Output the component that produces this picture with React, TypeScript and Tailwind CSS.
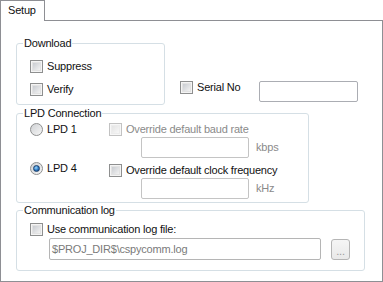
import React from "react";

const Checkbox = ({ disabled = false }: { disabled?: boolean }) => (
  <div
    className={`w-[13px] h-[13px] shrink-0 border p-[1px] ${
      disabled ? "border-[#c2c2c2] bg-[#f7f7f7]" : "border-[#8e8f8f] bg-[#f4f4f4]"
    }`}
  >
    <div
      className={`w-full h-full border bg-linear-to-br ${
        disabled
          ? "border-[#ececec] from-[#e4e4e4] to-[#f7f7f7]"
          : "border-[#e2e2e2] from-[#c9ccd1] to-[#f2f2f2]"
      }`}
    />
  </div>
);

const Radio = ({ checked = false }: { checked?: boolean }) => (
  <div className="w-[13px] h-[13px] shrink-0 rounded-full border border-[#8e8f8f] bg-linear-to-br from-[#cfd1d4] to-[#f6f6f6] flex items-center justify-center">
    {checked && (
      <div className="w-[7px] h-[7px] rounded-full border border-[#1b3f6b] bg-[radial-gradient(circle_at_40%_35%,#9ad8ff,#2a76c0_55%,#0f3c70)]" />
    )}
  </div>
);

const Field = ({ w, muted = false }: { w: string; muted?: boolean }) => (
  <div
    className={`${w} h-[21px] shrink-0 rounded-[2px] border bg-white ${
      muted ? "border-[#c4c4c4]" : "border-[#abadb3]"
    }`}
  />
);

const Row = ({ children, disabled = false, label }: { children: React.ReactNode; disabled?: boolean; label: string }) => (
  <div className="flex h-[13px] items-center gap-[4px]">
    {children}
    <span className={disabled ? "text-[#8a8a8a] whitespace-nowrap" : "whitespace-nowrap"}>{label}</span>
  </div>
);

export default function App() {
  return (
    <div className="w-[383px] h-[282px] bg-white text-[11px] leading-[13px] tracking-[-0.2px] text-[#111] font-['Liberation_Sans',Arial,sans-serif]">
      <div className="flex h-[21px]">
        <div className="w-[45px] h-[21px] border-l border-t border-r border-[#8e8f94] pl-[7px] pt-[3px]">Setup</div>
        <div className="flex-1 border-b border-[#8e8f94]" />
      </div>

      <div className="h-[261px] border-l border-r border-b border-[#8e8f94] pl-[15px] pt-[16px]">
        <div className="flex items-start">
          <fieldset className="w-[149px] h-[68px] border border-[#d5dfe5] rounded-[3px]">
            <legend className="ml-[6px] px-[1px]">Download</legend>
            <div className="pl-[13px] pt-[10px] flex flex-col gap-[10px]">
              <Row label="Suppress">
                <Checkbox />
              </Row>
              <Row label="Verify">
                <Checkbox />
              </Row>
            </div>
          </fieldset>

          <div className="ml-[15px] mt-[44px] flex items-start">
            <div className="w-[79px] flex h-[13px] items-center gap-[4px]">
              <Checkbox />
              <span>Serial No</span>
            </div>
            <Field w="w-[99px]" />
          </div>
        </div>

        <fieldset className="mt-[2px] w-[293px] h-[96px] border border-[#d5dfe5] rounded-[3px]">
          <legend className="ml-[6px] px-[1px]">LPD Connection</legend>
          <div className="flex pl-[13px] pt-[3px]">
            <div className="w-[79px] flex flex-col">
              <Row label="LPD 1">
                <Radio />
              </Row>
              <div className="mt-[26px]">
                <Row label="LPD 4">
                  <Radio checked />
                </Row>
              </div>
            </div>
            <div className="flex flex-col">
              <Row label="Override default baud rate" disabled>
                <Checkbox disabled />
              </Row>
              <div className="mt-[1px] ml-[32px] flex items-center gap-[7px] text-[#8a8a8a]">
                <Field w="w-[108px]" muted />
                <span>kbps</span>
              </div>
              <div className="mt-[6px]">
                <Row label="Override default clock frequency">
                  <Checkbox />
                </Row>
              </div>
              <div className="mt-[1px] ml-[32px] flex items-center gap-[7px] text-[#8a8a8a]">
                <Field w="w-[108px]" muted />
                <span>kHz</span>
              </div>
            </div>
          </div>
        </fieldset>

        <fieldset className="mt-[1px] w-[349px] h-[67px] border border-[#d5dfe5] rounded-[3px]">
          <legend className="ml-[6px] px-[1px]">Communication log</legend>
          <div className="pl-[13px] pt-[6px]">
            <Row label="Use communication log file:">
              <Checkbox />
            </Row>
            <div className="mt-[2px] ml-[19px] flex items-start">
              <div className="w-[272px] h-[22px] rounded-[2px] border border-[#b5b5b5] bg-white pl-[2px] flex items-center text-[#7a7a7a]">
                $PROJ_DIR$\cspycomm.log
              </div>
              <div className="ml-[10px] mt-[1px] w-[19px] h-[21px] rounded-[3px] border border-[#b5b5b5] bg-linear-to-b from-[#f5f5f5] to-[#e9e9e9] flex items-end justify-center pb-[4px] text-[#9a9a9a] leading-[8px]">
                ...
              </div>
            </div>
          </div>
        </fieldset>
      </div>
    </div>
  );
}
